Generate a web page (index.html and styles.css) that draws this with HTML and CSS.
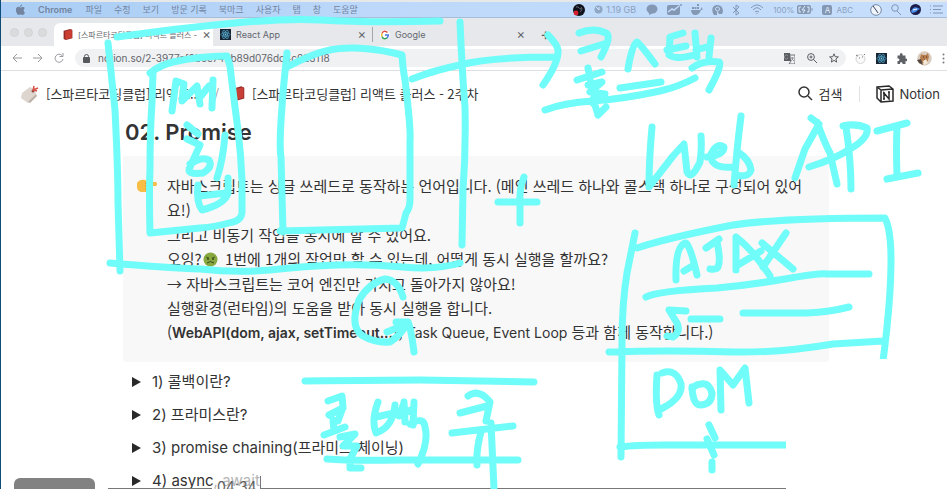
FILE: index.html
```html
<!DOCTYPE html>
<html lang="ko">
<head>
<meta charset="utf-8">
<title>리액트 플러스 - 2주차</title>
<link rel="stylesheet" href="styles.css">
</head>
<body>
<div class="screen">
  <nav class="menubar" aria-label="메뉴">
    <div class="menus">
      <svg class="apple" width="9" height="11" viewBox="0 0 18 22"><path d="M12 1c0 3-2 5-4 5 0-3 2-5 4-5zM9 7c2 0 3-1 5-1 1 0 3 1 4 2-4 3-3 8 0 9-1 3-3 5-5 5-1 0-2-1-4-1s-3 1-4 1C2 22-4 9 3 6c2-1 4 1 6 1z"/></svg>
      <b class="app">Chrome</b><span>파일</span><span>수정</span><span>보기</span><span>방문 기록</span><span>북마크</span><span>사용자</span><span>탭</span><span>창</span><span>도움말</span>
    </div>
    <div class="status">
      <svg width="12" height="12" viewBox="0 0 12 12"><circle cx="6" cy="6" r="6" fill="#10131b"/><path d="M3 3c3-1 3 2 5 2M8 3c2 2 0 4-1 5" stroke="#6d7482" fill="none"/><circle cx="3" cy="9" r="2.4" fill="#d81f2f"/></svg>
      <span class="mem"><svg width="9" height="9" viewBox="0 0 9 9"><circle cx="4.500" cy="4.500" r="4" fill="#8fa6c4"/><path d="M2 2l3 3M5 2v3" stroke="#d8e6fa"/></svg>1.19 GB</span>
      <svg width="12" height="11" viewBox="0 0 12 11"><ellipse cx="6" cy="5" rx="5.500" ry="4.500"/><path d="M3 7l0 4 4-2z"/></svg>
      <svg width="15" height="11" viewBox="0 0 15 11"><rect y="1" width="13" height="10" rx="2"/><path d="M1 8l4-3 2 1 5-4" stroke="#c3dbfa" stroke-width="1.500" fill="none"/><circle cx="14" cy="1" r="1"/></svg>
      <svg width="12" height="11" viewBox="0 0 12 11"><path d="M0 6h9c1 0 1-2 1-3 1 1 1 2 2 2-1 1-1 1-2 1-1 3-3 5-6 5C2 11 0 9 0 6zM1 3h2v2H1zM3.500 3h2v2h-2zM6 3h2v2H6zM6 0h2v2H6z"/></svg>
      <svg width="11" height="11" viewBox="0 0 11 11"><path d="M2 11C-1 7 0 1 5 1c6 0 7 6 5 9H7L5 7v4z"/><circle cx="5.500" cy="5" r="2" fill="none" stroke="#c3dbfa"/></svg>
      <svg class="line" width="9" height="12" viewBox="0 0 9 12"><path d="M1 3l6 6-3 2V1l3 2-6 6"/></svg>
      <svg class="line wifi" width="14" height="11" viewBox="0 0 14 11"><path d="M1 4c4-4 8-4 12 0M3 6c3-3 5-3 8 0M5 8c1-1 3-1 4 0M7 9v1"/></svg>
      <span class="battery">100%<svg width="16" height="9" viewBox="0 0 16 9"><rect width="14" height="9" rx="2"/><path d="M15 3v3" stroke="#8498b4"/><path d="M4 2H2v5h2M8 1L5 5h3L6 8M10 2h2v5h-2" stroke="#dcebff" fill="none"/></svg></span>
      <span class="lang"><i>A</i>ABC</span>
      <svg width="12" height="12" viewBox="0 0 12 12"><circle cx="6" cy="6" r="5.300" fill="#f0f5fc" stroke="#7688a3"/><path d="M3 2l3 4 2 3" stroke="#33445c" fill="none"/></svg>
      <svg class="line" width="10" height="11" viewBox="0 0 10 11"><circle cx="4" cy="4" r="3.300"/><path d="M6 7l4 4"/></svg>
      <svg width="11" height="11" viewBox="0 0 11 11"><circle cx="5.500" cy="5.500" r="5.500" fill="#1c1d4b"/><path d="M1 7c3-5 5-4 9-2-3 1-4 4-8 4z" fill="#4a8de6"/><path d="M3 6l4-1" stroke="#fff"/></svg>
      <svg class="line" width="13" height="9" viewBox="0 0 13 9"><path d="M0 1h1M3 1h10M0 4.500h1M3 4.500h8M0 8h1M3 8h10"/></svg>
    </div>
  </nav>

  <div class="tabs">
    <div class="lights"><i></i><i></i><i></i></div>
    <div class="tab active">
      <svg width="10" height="11" viewBox="0 0 18 20"><path d="M1 3l12-3 4 2v15l-12 3-4-2z" fill="#922b28"/><path d="M4 4l12-3v15L4 19z" fill="#cb3c32"/></svg>
      <span class="tab-title">[스파르타코딩클럽] 리액트 플러스 -</span>
      <button aria-label="탭 닫기">×</button>
    </div>
    <div class="tab">
      <svg class="react" width="11" height="11" viewBox="0 0 12 12"><use href="#react"/></svg>
      <span class="tab-title">React App</span>
      <button aria-label="탭 닫기">×</button>
    </div>
    <div class="tab">
      <svg width="10" height="10" viewBox="0 0 12 12"><circle cx="6" cy="6" r="6" fill="#fff"/><g fill="none" stroke-width="1.800"><path d="M9 3C6 0 3 2 2.500 4" stroke="#df4c40"/><path d="M2.500 4Q1.500 6 2.500 8" stroke="#efb72d"/><path d="M2.500 8c1 3 4 3 6 1.500" stroke="#36a257"/><path d="M6 6h4Q10 8 8.500 9.500" stroke="#467be0"/></g></svg>
      <span class="tab-title">Google</span>
      <button aria-label="탭 닫기">×</button>
    </div>
    <button class="new-tab" aria-label="새 탭">+</button>
  </div>

  <div class="toolbar">
    <div class="history">
      <button aria-label="뒤로"><svg width="10" height="10" viewBox="0 0 10 10"><path d="M10 5H1M5 1L1 5l4 4"/></svg></button>
      <button aria-label="앞으로"><svg width="10" height="10" viewBox="0 0 10 10"><path d="M0 5h9M5 1l4 4-4 4"/></svg></button>
      <button aria-label="새로고침"><svg width="10" height="10" viewBox="0 0 10 10"><path d="M8 2.500a4 4 0 1 0 1 3.500M9 0v3.500H5.500"/></svg></button>
    </div>
    <div class="address">
      <svg width="7" height="9" viewBox="0 0 7 9"><rect y="3" width="7" height="6" rx="1" fill="#55585d"/><path d="M1.500 4V2.500a2 2 0 0 1 4 0V4" fill="none" stroke="#55585d"/></svg>
      <input type="text" aria-label="주소" value="notion.so/2-3977ef0b5c742b89d076dc4c023118">
      <button aria-label="번역"><svg width="11" height="11" viewBox="0 0 11 11"><path d="M0 0h6l1 8H0z" fill="#5a5d62"/><path d="M6 2h5v9H5l2-3" fill="none" stroke="#6f7277"/><path d="M4 3a2 2 0 1 0 0 2H3M7 5h3M8 4c1 2 0 3-1 4M8 6l2 2" fill="none" stroke="#8c8f94"/></svg></button>
      <button aria-label="확대"><svg class="tool" width="10" height="10" viewBox="0 0 10 10"><circle cx="4" cy="4" r="3.400"/><path d="M6.500 6.500L10 10M2.500 4h3M4 2.500v3"/></svg></button>
      <button aria-label="북마크"><svg class="tool" width="10" height="10" viewBox="0 0 10 10"><path d="M5 .800l1.200 2.900 3.200.200-2.500 2 .800 3.200L5 7.400 2.300 9.100l.800-3.200-2.500-2 3.200-.200z"/></svg></button>
    </div>
    <div class="extensions">
      <svg width="11" height="11" viewBox="0 0 11 11"><circle cx="5.500" cy="6" r="4.500" fill="#fafafa" stroke="#d4d4d4"/><path d="M1 2l2 1M7 4h1M4 5h1M9 1l1 1" stroke="#777"/></svg>
      <svg class="react" width="11" height="11" viewBox="0 0 12 12"><g id="react"><rect width="12" height="12" fill="#182535"/><g fill="none" stroke="#53a8ca" stroke-width=".800"><ellipse cx="6" cy="6" rx="5" ry="2"/><ellipse cx="6" cy="6" rx="5" ry="2" transform="rotate(60 6 6)"/><ellipse cx="6" cy="6" rx="5" ry="2" transform="rotate(120 6 6)"/></g><circle cx="6" cy="6" r="1" fill="#70c9e9"/></g></svg>
      <svg width="10" height="11" viewBox="0 0 20 22"><path d="M1 5h5c-2-6 7-6 5 0h6v6c5-1 5 7 0 5v6h-6c1-5-6-5-5 0H1v-6c5 1 5-6 0-5z" fill="#5d6065"/></svg>
      <svg width="15" height="15" viewBox="0 0 15 15"><circle cx="7.500" cy="7.500" r="7.200" fill="#d9cbbd"/><path d="M4 3l2 1h3l2-2 1 4-2 6H5L3 7z" fill="#b77d4d"/><path d="M0 9l4-1 2 6-4-2z" fill="#56483e"/><path d="M6 6h1M9 6h1M7 9h2" stroke="#49352b"/><path d="M6 10l3-2 2 4-4 2z" fill="#f4e7d5"/></svg>
      <button aria-label="더보기"><svg width="3" height="11" viewBox="0 0 3 11"><g fill="#777a7f"><circle cx="1.500" cy="1.500" r="1"/><circle cx="1.500" cy="5.500" r="1"/><circle cx="1.500" cy="9.500" r="1"/></g></svg></button>
    </div>
  </div>

  <header class="crumbs">
    <a href="#"><svg width="18" height="18" viewBox="0 0 18 18"><path d="M1 8l8-6 5 3 1 4-8 9-7-5z" fill="#ddd5ce"/><path d="M7 17l8-8 1 2-7 7z" fill="#bbb0a7"/><circle cx="12" cy="6" r="1.500" fill="#8c4b47"/><path d="M12 6l1-5M12 5l5-2M13 5l3 1" stroke="#d85045" stroke-width="1.500"/></svg>[스파르타코딩클럽] 리액트...</a>
    <span class="slash">/</span>
    <a href="#"><svg width="13" height="17" viewBox="0 0 18 20"><path d="M2 3l11-3 4 2v15l-11 3-4-2z" fill="#8f2926"/><path d="M4 4l12-3v15L4 19z" fill="#c83f37"/><path d="M4 4v15" stroke="#e88a80"/></svg>[스파르타코딩클럽] 리액트 플러스 - 2주차</a>
    <div class="actions">
      <button class="search"><svg width="15" height="15" viewBox="0 0 15 15" fill="none" stroke="#333" stroke-width="1.500"><circle cx="6" cy="6" r="5"/><path d="M10 10l4 4"/></svg>검색</button>
      <a class="notion" href="#"><svg width="18" height="18" viewBox="0 0 18 18" fill="none" stroke="#292929" stroke-width="1.500"><path d="M1 2l12-1 4 3v12l-12 1-4-4zM1 2l4 3 12-1M5 5v12"/><path d="M8 14V8l5 6V7M7 8h2M7 14h2M12 7h2"/></svg>Notion</a>
    </div>
  </header>

  <main>
    <h1>02. Promise</h1>
    <section class="callout">
      <svg class="hand" width="21" height="14" viewBox="0 0 21 14"><path d="M0 4Q3 0 8 1l4 2h7q2 2 0 4h-6q1 5-3 6H4Q0 12 0 8z" fill="#f7bd45"/><path d="M8 4l4 1h2M8 7h5M8 10h4" stroke="#d88f2b" fill="none"/></svg>
      <div class="prose">
        <p>자바스크립트는 싱글 쓰레드로 동작하는 언어입니다. (메인 쓰레드 하나와 콜스택 하나로 구성되어 있어요!)</p>
        <p>그리고 비동기 작업을 동시에 할 수 있어요.<br>오잉?<svg class="sick" width="15" height="15" viewBox="0 0 15 15"><circle cx="7.500" cy="7.500" r="7" fill="#87a83e"/><path d="M3 5l3 1M12 5L9 6" stroke="#4b5d20"/><circle cx="5" cy="7" r="1" fill="#3c481d"/><circle cx="10" cy="7" r="1" fill="#3c481d"/><path d="M4 11q3-3 7 0" stroke="#3c481d" fill="none"/></svg> 1번에 1개의 작업만 할 수 있는데, 어떻게 동시 실행을 할까요?</p>
        <p>→ 자바스크립트는 코어 엔진만 가지고 돌아가지 않아요!<br>실행환경(런타임)의 도움을 받아 동시 실행을 합니다.<br>(<b>WebAPI(dom, ajax, setTimeout...)</b>, <span class="latin">Task Queue, Event Loop</span> 등과 함께 동작합니다.)</p>
      </div>
    </section>
    <div class="toggles">
      <details><summary>1) 콜백이란?</summary></details>
      <details><summary>2) 프라미스란?</summary></details>
      <details><summary>3) promise chaining(프라미스 체이닝)</summary></details>
      <details><summary>4) async<span class="faded">, await</span></summary></details>
    </div>
  </main>

  <div class="thumb"></div>
  <div class="timeline"><span class="rule start"></span><time>04:34</time><span class="rule end"></span></div>

  <svg class="ink" width="947" height="489" viewBox="0 0 947 489" aria-hidden="true">
    <clipPath id="board"><path d="M0 0H947V359H786V489H0z"/></clipPath>
    <g clip-path="url(#board)">
      <!-- engine frame -->
      <path d="M117 37Q180 28 235 23T320 20Q370 23 440 21M108 43L115 110Q118 170 118 203L120 271M460 22Q462 70 465 107Q466 150 463 190L462 245M110 263Q170 268 200 269Q236 273 270 270Q305 266 337 265T403 267T460 263"/>
      <!-- heap box -->
      <path d="M150 73Q160 65 173 62Q200 56 227 56L230 66Q233 92 238 130Q241 155 242 180V213Q241 220 233 222Q215 227 200 228L150 233Q149 190 150 170Q150 130 152 103L153 72"/>
      <path d="M172 111L176 81L184 84L182 101L197 86L200 104M201 96L209 86M213 80L212 108M187 125L198 134M187 139L200 145L190 167Q185 175 203 173Q213 167 209 160Q202 156 190 164M225 135Q223 160 217 178M198 185Q196 202 202 210Q225 204 228 193V178M200 196L226 193"/>
      <!-- call stack box -->
      <path d="M287 53Q283 90 282 107Q279 145 281 157L283 232M287 67Q300 60 313 55Q333 47 355 48Q380 49 402 55Q403 70 405 80Q411 130 410 140V200Q410 208 406 213Q403 225 402 228L280 231"/>
      <path d="M412 79Q435 70 460 65Q490 57 555 57M548 35Q557 44 558 50Q559 62 543 85M579 33Q594 27 606 33Q612 36 601 57M581 51L607 43M588 68L590 79M577 80L602 72M588 85L602 82L590 92L605 94Q586 99 594 104M598 115L606 107M595 105L598 115M628 69Q632 45 637 42Q641 45 655 64M620 88L661 82M670 37L683 33M667 50L686 46M670 38L669 55Q676 60 694 55M695 33L697 57M711 38L709 57M696 50L710 46M692 68Q703 60 719 62Q723 64 709 90M545 110Q563 103 593 101T660 91Q678 87 695 78"/>
      <path d="M498 202L537 202M524 177Q519 190 520 204V223"/>
      <!-- Web API -->
      <path d="M652 127Q649 160 649 187L673 156L684 144L687 172Q691 181 700 162Q702 149 701 136M707 157Q724 155 724 147Q717 142 711 154Q710 169 733 167M741 116Q737 147 734 185M738 152Q750 160 751 170Q749 178 735 175M811 118L819 124L805 149L795 178M817 122Q825 144 830 153L837 184M809 167Q835 159 850 149Q869 138 867 128Q856 123 843 126M846 127Q851 160 851 189M877 131L907 123M897 126Q896 150 897 176M887 179L918 173"/>
      <!-- API list -->
      <path d="M635 233L627 273Q622 303 622 343L621 457M637 248Q667 238 733 225Q780 218 885 218Q891 230 891 260Q891 300 883 361M609 352Q667 350 733 352Q780 353 833 344L883 341M620 447Q635 445 665 445H788"/>
      <path d="M676 280Q675 245 686 243Q691 248 697 275M684 271L694 265M706 248L719 239M717 242Q721 260 718 267Q717 270 710 269M736 237V270M736 237Q752 249 770 276M738 265L761 251M762 243L793 269M786 233L763 267M646 297Q656 291 717 288Q750 285 785 279T827 274H869M686 311L669 310L677 323Q681 332 673 337L667 336M691 319H720M743 313H807Q830 312 849 307"/>
      <path d="M657 375Q655 405 659 415M662 373Q676 368 681 384Q683 398 661 409M692 387Q693 406 701 405Q712 404 712 393Q709 382 701 384Q696 384 692 389M721 410L720 370L733 385L745 368L749 403M709 425L715 438M707 439L714 455M712 462V470"/>
      <!-- event loop arrow -->
      <path d="M403 297Q398 280 385 279Q369 283 359 300Q349 327 363 336Q375 343 390 342Q401 335 408 322M396 322L408 322Q411 328 414 352M404 325L387 332"/>
      <!-- callback queue -->
      <path d="M305 381Q390 380 420 380L534 382M327 459Q350 461 400 460H518M328 401L342 396L343 407L338 421M329 415L343 408M333 420L334 431M324 435L345 427M340 437L355 434L343 446L357 446L350 459V468H361M378 402Q371 421 376 433Q393 427 395 405M376 417L394 413M404 403L399 416M404 402L405 422M414 402L413 425M405 413L413 409M410 424Q424 416 425 427Q429 442 418 464M468 396Q479 388 490 402L486 421M460 413L487 406M452 433L513 426M481 432Q476 450 477 465M491 423L494 489"/>
    </g>
  </svg>
</div>
</body>
</html>
```
FILE: styles.css
```css
* { box-sizing: border-box; }

body {
  margin: 0;
  background: #fff;
  color: #333;
  font-family: Inter, "Noto Sans CJK KR", sans-serif;
}

button {
  padding: 0;
  border: 0;
  background: none;
  color: inherit;
  font: inherit;
}

a { color: inherit; text-decoration: none; }
svg { flex: none; }
b { font-weight: 600; }

.screen {
  position: relative;
  height: 100vh;
  overflow: hidden;
  border-left: 1px solid #0e4d78;
}

.menubar {
  display: flex;
  justify-content: space-between;
  align-items: center;
  height: 18px;
  padding: 0 4px 0 15px;
  border-top: 2px solid #e7e9e9;
  border-bottom: 1px solid #a8bdd8;
  background: linear-gradient(90deg, #a9cdf4, #bdd8fa 40%, #c7dffc);
  color: #72849f;
  font-size: 9px;
  line-height: 14px;
}

.menus, .status, .mem, .battery, .lang { display: flex; align-items: center; }
.menus { gap: 12px; }
.apple { margin-right: 1px; fill: #72849f; }
.app { margin-right: 1px; }
.status { gap: 9px; color: #8ba0bd; fill: #8498b4; }
.mem { gap: 3px; margin-right: 1px; }
.battery { gap: 3px; font-size: 8px; }
.lang { gap: 4px; margin-right: 8px; font-size: 8px; }
.lang i {
  width: 10px;
  border-radius: 2px;
  background: #8498b4;
  color: #e0ecfc;
  font-style: normal;
  line-height: 10px;
  text-align: center;
}
.line { fill: none; stroke: #8196b3; }

.tabs {
  display: flex;
  align-items: flex-end;
  height: 28px;
  background: #e6e8ec;
}
.lights { display: flex; gap: 5px; padding: 0 7px 9px 9px; }
.lights i { width: 9px; height: 9px; border: 1px solid #d3d3d5; border-radius: 50%; background: #dadbdd; }
.tab {
  display: flex;
  align-items: center;
  flex: 0 1 159px;
  gap: 5px;
  min-width: 0;
  height: 23px;
  padding: 0 6px 0 7px;
  color: #64676c;
  font-size: 9px;
}
.tab.active { padding-left: 9px; border-radius: 6px 6px 0 0; background: #fff; font-size: 8px; }
.tab-title { flex: 1; white-space: nowrap; }
.tab button { font-size: 13px; line-height: 13px; }
.tab + .tab + .tab { border-left: 1px solid transparent; border-image: linear-gradient(transparent 5px, #a4a6aa 5px, #a4a6aa 18px, transparent 18px) 1; }
.new-tab { align-self: center; width: 29px; margin-top: 4px; color: #55585d; font-size: 16px; line-height: 16px; }

.toolbar {
  display: flex;
  align-items: center;
  height: 25px;
  border-bottom: 1px solid #dddfe2;
}
.history { display: flex; gap: 11px; padding: 0 11px; }
.history button { display: flex; }
.history svg { fill: none; stroke: #999b9f; }
.address {
  display: flex;
  align-items: center;
  flex: 1;
  gap: 12px;
  height: 18px;
  padding: 0 7px 0 8px;
  border-radius: 9px;
  background: #f0f1f3;
}
.address > svg { margin-right: -4px; }
.address button { display: flex; }
.address input {
  flex: 1;
  min-width: 0;
  padding: 0;
  border: 0;
  background: none;
  color: #62656a;
  font: 10px/16px Inter, sans-serif;
}
.tool { fill: none; stroke: #5a5d62; }
.extensions { display: flex; align-items: center; gap: 10px; padding: 0 2px 0 9px; }

.crumbs {
  display: flex;
  align-items: center;
  height: 45px;
  padding: 0 7px 0 20px;
  font-family: "Noto Sans CJK KR", sans-serif;
  font-size: 13px;
}
.crumbs a { display: flex; align-items: center; gap: 7px; white-space: nowrap; }
.slash { margin: 0 13px; color: #999; }
.actions { display: flex; align-items: center; margin-left: auto; }
.search { display: flex; align-items: center; gap: 6px; padding-right: 16px; border-right: 1px solid #e2e2e2; line-height: 16px; }
.crumbs .notion { gap: 6px; padding-left: 16px; font-family: Inter, sans-serif; }

main { padding: 0 118px 0 122px; }
h1 { margin: 0 0 8px 2px; font-size: 22px; font-weight: 600; line-height: 32px; }
.callout {
  display: flex;
  align-items: flex-start;
  gap: 9px;
  padding: 18px 20px 17px 14px;
  border-radius: 2px;
  background: #f8f8f8;
}
.hand { margin-top: 5px; }
.prose {
  display: grid;
  gap: 1px;
  font-family: "Noto Sans CJK KR", sans-serif;
  font-size: 15px;
  line-height: 24px;
  word-break: break-all;
}
.prose p { margin: 0; }
.prose b, .latin { font-family: Inter, sans-serif; font-size: 14px; }
.sick { margin: 0 3px 0 1px; vertical-align: -2px; }

.toggles { display: grid; gap: 9px; padding: 8px 0 0 9px; font-size: 15px; line-height: 24px; }
.toggles summary { display: flex; align-items: center; list-style: none; white-space: pre; }
.toggles summary::before {
  content: "";
  margin-right: 11px;
  border-left: 9px solid #292929;
  border-top: 5px solid transparent;
  border-bottom: 5px solid transparent;
}
.faded { color: #b5b5b5; }

.thumb {
  position: absolute;
  left: 13px;
  bottom: 0;
  width: 81px;
  height: 11px;
  border-radius: 6px 6px 0 0;
  background: #828282;
}
.timeline {
  position: absolute;
  left: 107px;
  bottom: 0;
  display: flex;
  align-items: flex-end;
  width: 678px;
  height: 13px;
  overflow: hidden;
  color: #606060;
}
.rule { border-bottom: 1px solid #777; }
.start { width: 104px; }
.end { flex: 1; height: 13px; border-left: 1px solid #777; }
.timeline time { height: 9px; padding: 0 3px 0 5px; font-size: 14px; line-height: 14px; }

.ink {
  position: absolute;
  top: 0;
  left: -1px;
  fill: none;
  stroke: #70fcf8;
  stroke-width: 7px;
  stroke-linecap: round;
  stroke-linejoin: round;
  pointer-events: none;
}
```
